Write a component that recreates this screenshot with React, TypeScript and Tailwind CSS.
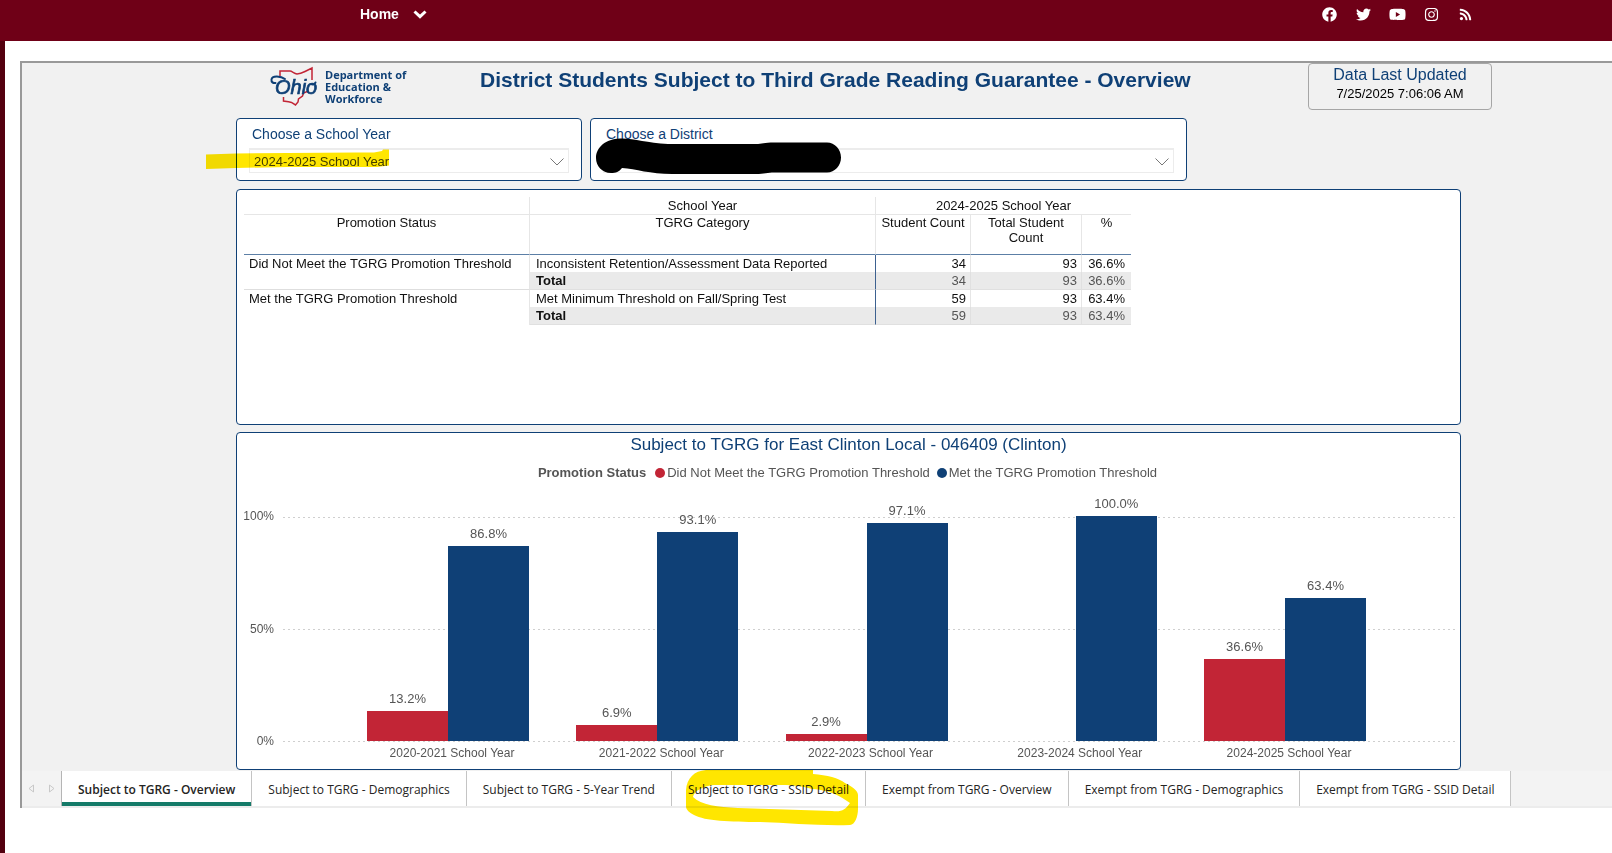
import type { ReactNode } from 'react';
import { FaFacebook, FaInstagram, FaRss, FaTwitter, FaYoutube } from 'react-icons/fa';

const SOCIAL = [
  { name: 'Facebook', icon: <FaFacebook size={15} /> },
  { name: 'Twitter', icon: <FaTwitter size={15} /> },
  { name: 'YouTube', icon: <FaYoutube size={17} /> },
  { name: 'Instagram', icon: <FaInstagram size={15} /> },
  { name: 'RSS', icon: <FaRss size={13} /> },
];

const YEARS = [
  { year: '2020-2021 School Year', notMet: 13.2, met: 86.8 },
  { year: '2021-2022 School Year', notMet: 6.9, met: 93.1 },
  { year: '2022-2023 School Year', notMet: 2.9, met: 97.1 },
  { year: '2023-2024 School Year', notMet: 0, met: 100 },
  { year: '2024-2025 School Year', notMet: 36.6, met: 63.4 },
];

const STATUSES = [
  {
    status: 'Did Not Meet the TGRG Promotion Threshold',
    category: 'Inconsistent Retention/Assessment Data Reported',
    count: 34,
    total: 93,
    pct: '36.6%',
  },
  {
    status: 'Met the TGRG Promotion Threshold',
    category: 'Met Minimum Threshold on Fall/Spring Test',
    count: 59,
    total: 93,
    pct: '63.4%',
  },
];

const TABS = [
  'Subject to TGRG - Overview',
  'Subject to TGRG - Demographics',
  'Subject to TGRG - 5-Year Trend',
  'Subject to TGRG - SSID Detail',
  'Exempt from TGRG - Overview',
  'Exempt from TGRG - Demographics',
  'Exempt from TGRG - SSID Detail',
];

export default function App() {
  return (
    <div className="min-h-screen flex flex-col bg-white overflow-x-hidden font-['Liberation_Sans',Arial,sans-serif]">
      {/* Site header */}
      <header className="h-[41px] shrink-0 bg-[#6f0017] text-white flex justify-between pl-[360px] pr-[130px]">
        <nav className="h-7 flex items-center">
          <a href="#home" className="flex items-center gap-[14px] text-sm font-bold">
            Home
            <svg width="14" height="9" viewBox="0 0 14 9" fill="none" stroke="currentColor" strokeWidth="3">
              <path d="M1.500 1.500L7 6.700l5.500-5.200" />
            </svg>
          </a>
        </nav>
        <div className="h-7 flex items-center">
          {SOCIAL.map((s) => (
            <a key={s.name} href="#social" aria-label={s.name} className="w-[34px] flex justify-center">
              {s.icon}
            </a>
          ))}
        </div>
      </header>

      <main className="flex-1 border-l-[5px] border-[#54000f] pt-5 pl-[15px]">
        {/* Embedded report */}
        <div className="border-l-2 border-t-2 border-[#999] bg-[#f1f1f1]">
          <div className="ml-[214px] max-w-[1256px] pb-px">
            <ReportHeader />
            <div className="mr-[31px]">
              <Slicers />
              <Panel className="mt-2 min-h-[236px] px-[7px] pt-[7px]">
                <StatusTable />
              </Panel>
              <Panel className="mt-[7px] min-h-[338px]">
                <Chart />
              </Panel>
            </div>
          </div>
          <PageTabs />
        </div>
      </main>
    </div>
  );
}

function Panel({ className, children }: { className: string; children: ReactNode }) {
  return <section className={`bg-white border border-[#0f4076] rounded ${className}`}>{children}</section>;
}

function ReportHeader() {
  return (
    <div className="h-[55px] flex items-start">
      <div className="w-[244px] shrink-0 pl-8 pt-[3px] flex gap-[7px] text-[#0f4076]">
        <OhioLogo />
        <div className="pt-[3px] text-[11px] leading-3 font-bold whitespace-nowrap font-['Open_Sans','Noto_Sans',sans-serif]">
          Department of
          <br />
          Education &amp;
          <br />
          Workforce
        </div>
      </div>
      <h1 className="pt-[5px] text-[21px] leading-6 font-bold text-[#0f4076] whitespace-nowrap">
        District Students Subject to Third Grade Reading Guarantee - Overview
      </h1>
      <div className="ml-auto w-[184px] h-[47px] border border-[#a6a6a6] rounded text-center">
        <div className="text-base leading-[22px] text-[#0f4076]">Data Last Updated</div>
        <div className="text-[13px] leading-4 text-black">7/25/2025 7:06:06 AM</div>
      </div>
    </div>
  );
}

// State outline with the wordmark across it
function OhioLogo() {
  return (
    <svg width="50" height="42" viewBox="0 0 50 42" fill="none" role="img" aria-label="Ohio">
      <g stroke="#c22536" strokeWidth="1.5" strokeLinejoin="miter">
        <path d="M12 10V5h10c2 0 4 2.500 7 3 3-.2 5-1 8-2.500l7-3.500v12" />
        <path d="M15.500 31v4l5 .8 3 .6 4 2.600 2.500-3 .5-3 4-3 1-3 5-2" />
      </g>
      <text
        x="7"
        y="28"
        fill="#0f4076"
        stroke="#0f4076"
        strokeWidth="0.700"
        fontSize="20"
        fontStyle="italic"
        fontFamily="'Liberation Sans', sans-serif"
      >
        Ohio
      </text>
      <g stroke="#0f4076" strokeWidth="2" strokeLinecap="round">
        <path d="M17 13c-4-3-13-4-13.500.5-.3 2.500 1.500 4 4 3.500" />
        <path d="M43 18c1.500 1 3.500.5 4.500-1.500" />
      </g>
    </svg>
  );
}

function Slicers() {
  return (
    <div className="flex gap-2">
      <Panel className="relative w-[346px] h-[63px] pl-3 pr-3 pt-[7px]">
        <label htmlFor="year" className="block pl-[3px] text-sm leading-4 text-[#0f4076]">
          Choose a School Year
        </label>
        <SlicerSelect id="year" value="2024-2025 School Year" />
        {/* Marker stroke over the chosen year */}
        <svg className="absolute left-[-31px] top-[30px] mix-blend-multiply pointer-events-none" width="186" height="22" viewBox="0 0 186 22">
          <path fill="#ffe600" d="M0 5.500L30 4.500l120-1 18 0 8-1.500 1-1.500h6v16l-12 1.500h-90L30 19 0 20z" />
        </svg>
      </Panel>
      <Panel className="relative w-[597px] h-[63px] pl-3 pr-3 pt-[7px]">
        <label htmlFor="district" className="block pl-[3px] text-sm leading-4 text-[#0f4076]">
          Choose a District
        </label>
        <SlicerSelect id="district" value="" />
        {/* Blacked-out district name */}
        <svg className="absolute left-[5px] top-[19px] pointer-events-none" width="246" height="37" viewBox="0 0 246 37">
          <path
            fill="#000"
            d="M0 20C0 9 10 1 24 .5 38 0 50 5 72 6h88c6 0 8-1.500 18-1.500h53c8 0 14 7 14 15s-6 15-14 15h-53c-6 0-10 1.500-18 1.500H76c-22 0-36-5-50-6-3 4-6 5-11 5C6 35 0 28 0 20z"
          />
        </svg>
      </Panel>
    </div>
  );
}

function SlicerSelect({ id, value }: { id: string; value: string }) {
  return (
    <div className="relative mt-[6px]">
      <select
        id={id}
        defaultValue={value}
        className="block w-full h-[25px] appearance-none rounded-none border border-t-2 border-[#ececec] bg-white pl-1 pr-8 pt-px text-[13px] text-[#444]"
      >
        <option value={value}>{value}</option>
      </select>
      <svg className="absolute right-[5px] top-[10px] pointer-events-none" width="14" height="8" viewBox="0 0 14 8" fill="none" stroke="#777">
        <path d="M.5.5L7 7 13.500.5" />
      </svg>
    </div>
  );
}

function StatusTable() {
  return (
    <table className="w-[887px] table-fixed border-separate border-spacing-0 text-[13px] leading-[15px] text-[#111]">
      <colgroup>
        <col className="w-[286px]" />
        <col className="w-[346px]" />
        <col className="w-[95px]" />
        <col className="w-[111px]" />
        <col className="w-[49px]" />
      </colgroup>
      <thead>
        <tr className="h-[18px] align-top">
          <th className="border-b border-r border-[#e6e6e6]"></th>
          <th className="font-normal pt-px border-b border-r border-[#e6e6e6]">School Year</th>
          <th colSpan={3} className="font-normal pt-px border-b border-[#e6e6e6]">
            2024-2025 School Year
          </th>
        </tr>
        <tr className="h-10 align-top">
          <th className="font-normal border-b border-b-[#5c7fa6] border-r border-r-[#e6e6e6]">Promotion Status</th>
          <th className="font-normal border-b border-b-[#5c7fa6] border-r border-r-[#e6e6e6]">TGRG Category</th>
          <th className="font-normal border-b border-b-[#5c7fa6] border-r border-r-[#e6e6e6] whitespace-nowrap">Student Count</th>
          <th className="font-normal px-3 border-b border-b-[#5c7fa6] border-r border-r-[#e6e6e6]">Total Student Count</th>
          <th className="font-normal border-b border-b-[#5c7fa6]">%</th>
        </tr>
      </thead>
      {STATUSES.map((s, i) => (
        <tbody key={s.status}>
          <tr className="h-[17px] align-top">
            <td
              rowSpan={2}
              className={`pl-[5px] pt-px whitespace-nowrap border-r border-r-[#e6e6e6] ${i === 0 ? 'border-b border-b-[#dedede]' : ''}`}
            >
              {s.status}
            </td>
            <td className="pl-[6px] pt-px whitespace-nowrap border-r border-r-[#3d6190]">{s.category}</td>
            <td className="pr-1 pt-px text-right border-r border-[#e6e6e6]">{s.count}</td>
            <td className="pr-1 pt-px text-right border-r border-[#e6e6e6]">{s.total}</td>
            <td className="pr-[6px] pt-px text-right">{s.pct}</td>
          </tr>
          <tr className="h-[18px] bg-[#eaeaea]">
            <td className="pl-[6px] font-bold border-b border-b-[#e0e0e0] border-r border-r-[#3d6190]">Total</td>
            <td className="pr-1 text-right text-[#555] border-b border-r border-[#e0e0e0]">{s.count}</td>
            <td className="pr-1 text-right text-[#555] border-b border-r border-[#e0e0e0]">{s.total}</td>
            <td className="pr-[6px] text-right text-[#555] border-b border-[#e0e0e0]">{s.pct}</td>
          </tr>
        </tbody>
      ))}
    </table>
  );
}

function Chart() {
  return (
    <div className="pt-[2px] text-[#555]">
      <h2 className="text-center text-[17px] leading-5 text-[#0f4076]">
        Subject to TGRG for East Clinton Local - 046409 (Clinton)
      </h2>
      <div className="mt-2 pr-[2px] flex justify-center text-[13px] leading-5">
        <span className="font-bold mr-[9px]">Promotion Status</span>
        <span className="flex items-center gap-[2px] mr-[7px]">
          <span className="size-[10px] rounded-full bg-[#c22536]"></span>
          Did Not Meet the TGRG Promotion Threshold
        </span>
        <span className="flex items-center gap-[2px]">
          <span className="size-[10px] rounded-full bg-[#0f4076]"></span>
          Met the TGRG Promotion Threshold
        </span>
      </div>

      <div className="mt-[33px] flex pr-1">
        {/* Y axis */}
        <div className="w-[46px] h-[225px] shrink-0 pr-[9px] flex flex-col justify-between text-right text-xs">
          {['100%', '50%', '0%'].map((t) => (
            <div key={t} className="h-0 flex items-center justify-end">
              {t}
            </div>
          ))}
        </div>
        <div className="flex-1">
          <div className="relative h-[225px]">
            <div className="absolute inset-x-0 top-px -bottom-px flex flex-col justify-between">
              {[0, 1, 2].map((n) => (
                <svg key={n} className="w-full h-px">
                  <line x1="0" x2="100%" y1="0.500" y2="0.500" stroke="#cfcfcf" strokeDasharray="2 3" />
                </svg>
              ))}
            </div>
            <div className="relative h-full flex justify-between pl-[84px] pr-[90px]">
              {YEARS.map((y) => (
                <div key={y.year} className="w-[162px] flex items-end">
                  <Bar value={y.notMet} color="bg-[#c22536]" />
                  <Bar value={y.met} color="bg-[#0f4076]" />
                </div>
              ))}
            </div>
          </div>
          <div className="mt-1 flex justify-between pl-[88px] pr-[86px] text-xs leading-4">
            {YEARS.map((y) => (
              <div key={y.year} className="w-[162px] text-center whitespace-nowrap">
                {y.year}
              </div>
            ))}
          </div>
        </div>
      </div>
    </div>
  );
}

function Bar({ value, color }: { value: number; color: string }) {
  if (!value) return <div className="flex-1"></div>;
  return (
    <div className={`relative flex-1 ${color}`} style={{ height: `${value}%` }}>
      <span className="absolute inset-x-0 bottom-full mb-1 text-center text-[13px] leading-4">{value.toFixed(1)}%</span>
    </div>
  );
}

function PageTabs() {
  return (
    <div className="h-[37px] flex bg-[#f3f3f3] border-b-2 border-[#ececec] font-['Open_Sans','Noto_Sans',sans-serif]">
      <div className="w-10 shrink-0 flex items-center justify-center gap-[15px] border-r border-[#b5b5b5]">
        <button aria-label="Previous page">
          <svg width="6" height="9" viewBox="0 0 6 9" fill="none" stroke="#c8c8c8">
            <path d="M5.500 1v7L1 4.500z" />
          </svg>
        </button>
        <button aria-label="Next page">
          <svg width="6" height="9" viewBox="0 0 6 9" fill="none" stroke="#c8c8c8">
            <path d="M.5 1v7L5 4.500z" />
          </svg>
        </button>
      </div>
      {TABS.map((t, i) => (
        <button
          key={t}
          className={`relative px-4 pt-[2px] bg-white border-r border-[#c4c4c4] text-xs whitespace-nowrap text-[#252423] ${
            i === 0 ? 'font-semibold shadow-[inset_0_-4px_0_#147a68]' : ''
          }`}
        >
          {t}
          {i === 3 && <MarkerLoop />}
        </button>
      ))}
    </div>
  );
}

// Marker circle drawn around the SSID Detail tab
function MarkerLoop() {
  return (
    <svg
      className="absolute left-[14px] top-[-1px] z-10 mix-blend-multiply pointer-events-none"
      width="174"
      height="56"
      viewBox="0 0 174 56"
    >
      <path
        fill="#ffe600"
        fillRule="evenodd"
        d="M20 0h107v4c14 1 26 4 32 9 8 4 13 8 13 12v14c0 7-3 16-8 16-30 1-60-2-90-3-30 0-55-1-66-7C3 42 0 40 0 36V20C1 8 8 1 20 0zM28 15C17 16 8 21 7 27c8 8 25 10 45 11l94 3c10 1 13-1 18-8-10-7-20-13-38-14C112 14 92 15 75 15z"
      />
    </svg>
  );
}
